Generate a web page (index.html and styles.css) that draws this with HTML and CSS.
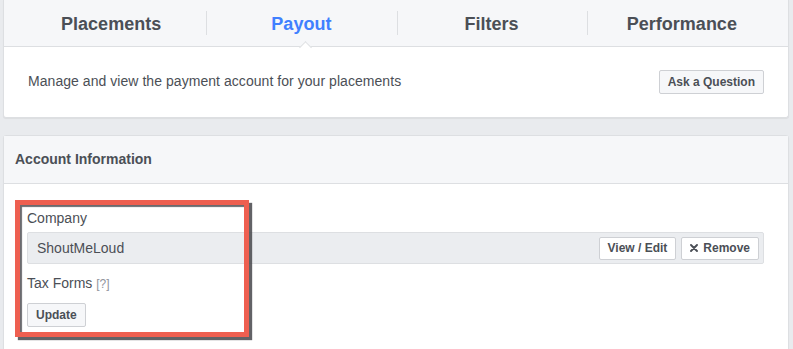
FILE: index.html
```html
<!DOCTYPE html>
<html>
<head>
<meta charset="utf-8">
<link rel="stylesheet" href="styles.css">
</head>
<body>
<div class="page">
  <section class="card top-card">
    <nav class="tabs">
      <div class="tab">Placements</div>
      <div class="tab active">Payout</div>
      <div class="tab">Filters</div>
      <div class="tab">Performance</div>
    </nav>
    <div class="desc-row">
      <span class="desc">Manage and view the payment account for your placements</span>
      <button class="btn">Ask a Question</button>
    </div>
  </section>

  <section class="card account-card">
    <header class="card-header">Account Information</header>
    <div class="card-body">
      <div class="field-label">Company</div>
      <div class="input-row">
        <span class="input-value">ShoutMeLoud</span>
        <div class="input-actions">
          <button class="btn btn-sm">View / Edit</button>
          <button class="btn btn-sm"><svg class="x-icon" width="8" height="8" viewBox="0 0 8 8"><path d="M1 1L7 7M7 1L1 7" stroke="#4b4f56" stroke-width="1.9" stroke-linecap="round"/></svg>Remove</button>
        </div>
      </div>
      <div class="field-label tax">Tax Forms <span class="help">[?]</span></div>
      <button class="btn update">Update</button>
    </div>
  </section>

  <div class="highlight"></div>
</div>
</body>
</html>
```

FILE: styles.css
```css
html, body {
  margin: 0;
  padding: 0;
  background: #e9ebee;
  font-family: "Liberation Sans", Arial, Helvetica, sans-serif;
  color: #4b4f56;
}

.page {
  position: relative;
  padding: 0 4px 0 3px;
  height: 349px;
  overflow: hidden;
}

.card {
  background: #fff;
  border: 1px solid #dddfe2;
  border-radius: 0 0 3px 3px;
  box-shadow: 0 1px 1px rgba(0, 0, 0, 0.06);
}

.top-card {
  border-top: none;
}

.tabs {
  display: grid;
  grid-template-columns: repeat(4, 1fr);
  padding: 0 11px 0 12px;
  height: 46px;
  background: #f6f7f9;
  border-bottom: 1px solid #dddfe2;
}

.tab {
  position: relative;
  text-align: center;
  font-size: 18px;
  font-weight: bold;
  line-height: 46px;
  padding-top: 1px;
  color: #4b4f56;
}

.tab + .tab::before {
  content: "";
  position: absolute;
  left: 0;
  top: 11px;
  height: 24px;
  border-left: 1px solid #dddfe2;
}

.tab.active {
  color: #4080ff;
}

.tab.active::after {
  content: "";
  position: absolute;
  left: 50%;
  bottom: -5px;
  width: 8px;
  height: 8px;
  background: #fff;
  border-left: 1px solid #dddfe2;
  border-top: 1px solid #dddfe2;
  transform: rotate(45deg);
}

.desc-row {
  display: flex;
  align-items: center;
  justify-content: space-between;
  height: 70px;
  padding: 0 24px 0 24px;
}

.desc {
  font-size: 14px;
  padding-bottom: 2px;
  letter-spacing: 0.05px;
}

.btn {
  display: inline-flex;
  align-items: center;
  height: 24px;
  padding: 0 8px;
  font-family: "Liberation Sans", Arial, Helvetica, sans-serif;
  font-size: 12px;
  font-weight: bold;
  color: #4b4f56;
  background: #f6f7f9;
  border: 1px solid #ced0d4;
  border-radius: 2px;
  box-sizing: border-box;
}

.account-card {
  margin-top: 17px;
  height: 260px;
  border-radius: 3px;
}

.card-header {
  height: 47px;
  line-height: 47px;
  padding-left: 11px;
  font-size: 14px;
  font-weight: bold;
  background: #f6f7f9;
  border-bottom: 1px solid #dddfe2;
}

.card-body {
  padding: 25px 24px 0 22px;
}

.field-label {
  font-size: 14px;
  line-height: 18px;
  padding-left: 1px;
}

.input-row {
  display: flex;
  align-items: center;
  justify-content: space-between;
  margin-top: 5px;
  margin-left: 1px;
  height: 32px;
  box-sizing: border-box;
  padding: 0 4px 0 9px;
  background: #ebedf0;
  border: 1px solid #dddfe2;
  border-radius: 2px;
}

.input-value {
  font-size: 14px;
}

.input-actions {
  display: flex;
  gap: 5px;
}

.btn-sm {
  height: 23px;
  background: #fff;
}

.x-icon {
  margin-right: 5px;
}

.tax {
  margin-top: 10px;
}

.help {
  font-size: 12px;
  color: #90949c;
}

.update {
  margin-top: 10px;
  margin-left: 1px;
}

.highlight {
  position: absolute;
  left: 15px;
  top: 200px;
  width: 234px;
  height: 137px;
  box-sizing: border-box;
  border: 5px solid #ee5f50;
  box-shadow: 3px 3px 1px rgba(70, 70, 75, 0.85), inset 2px 2px 1px rgba(70, 70, 75, 0.8);
}
```
